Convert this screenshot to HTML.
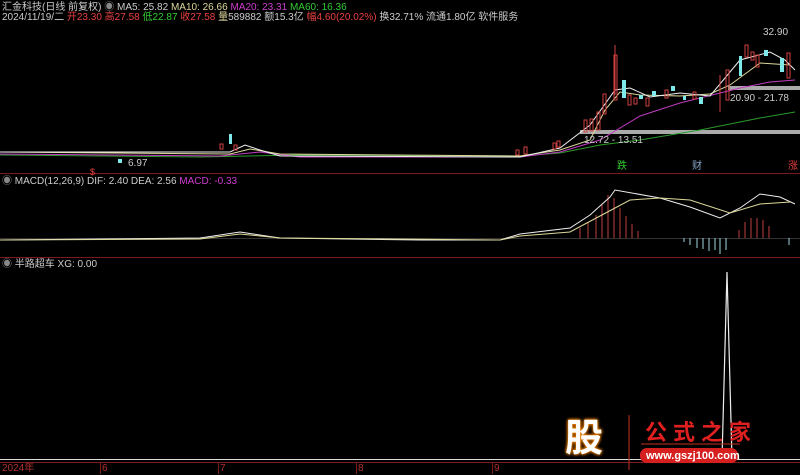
<!DOCTYPE html>
<html><head><meta charset="utf-8"><style>
body{margin:0;background:#000;width:800px;height:474px;overflow:hidden;position:relative;font-family:"Liberation Sans","Noto Sans CJK SC",sans-serif;font-size:10px;color:#ccc}
.t{position:absolute;white-space:nowrap;line-height:12px}
.r{color:#e84040}.g{color:#3c3}.y{color:#dcd89a}.m{color:#d03cd0}.w{color:#ccc}
</style></head><body>
<svg width="800" height="474" style="position:absolute;left:0;top:0">
<g stroke="#7a1a1a" stroke-width="1">
<line x1="0" y1="173.5" x2="800" y2="173.5"/><line x1="0" y1="257.5" x2="800" y2="257.5"/><line x1="0" y1="462.5" x2="800" y2="462.5"/>
<line x1="100.5" y1="462" x2="100.5" y2="474"/><line x1="218.5" y1="462" x2="218.5" y2="474"/><line x1="356.5" y1="462" x2="356.5" y2="474"/><line x1="492.5" y1="462" x2="492.5" y2="474"/>
</g>
<line x1="0" y1="459.5" x2="800" y2="459.5" stroke="#ddd"/>
<polyline points="722,459 727,272 732,459" fill="none" stroke="#eee" stroke-width="1.2"/>
<rect x="580" y="130" width="220" height="4" fill="#aaa"/>
<rect x="728" y="86" width="72" height="4" fill="#aaa"/>
<polyline points="0,155 200,157 300,155 520,156 560,153 600,145 640,140 700,130 760,118 795,112" fill="none" stroke="#2a9a2a"/>
<polyline points="0,154 220,156 260,152 300,157 520,157 560,152 600,140 640,116 680,103 700,98 740,88 770,82 795,80" fill="none" stroke="#c03cc0"/>
<polyline points="0,152 230,154 250,149 280,154 520,156 560,150 590,140 605,110 620,92 640,95 680,96 710,94 730,85 760,63 790,65" fill="none" stroke="#dcd89a"/>
<polyline points="0,152 230,152 245,145 260,150 280,156 520,157 560,148 590,125 615,90 630,88 650,97 680,93 710,96 740,60 770,52 785,60 795,70" fill="none" stroke="#eee"/>
<g fill="none" stroke="#d04040">
<rect x="516" y="150" width="3" height="5"/><rect x="524" y="147" width="3" height="7"/><rect x="553" y="143" width="3" height="6"/><rect x="557" y="141" width="3" height="6"/>
<rect x="584" y="120" width="3" height="12"/><rect x="590" y="119" width="3" height="12"/><rect x="597" y="112" width="3" height="18"/><rect x="603" y="94" width="3" height="20"/>
<rect x="614" y="55" width="3" height="45"/><rect x="628" y="95" width="3" height="10"/><rect x="634" y="98" width="3" height="6"/><rect x="646" y="98" width="3" height="8"/>
<rect x="665" y="90" width="3" height="8"/><rect x="693" y="92" width="3" height="7"/><rect x="726" y="70" width="3" height="30"/><rect x="745" y="45" width="3" height="12"/>
<rect x="751" y="52" width="3" height="8"/><rect x="756" y="55" width="3" height="12"/><rect x="787" y="53" width="3" height="25"/>
<rect x="220" y="144" width="3" height="5"/><rect x="234" y="145" width="3" height="5"/><line x1="615" y1="45" x2="615" y2="95"/>
</g>
<g fill="#7fe8e8">
<rect x="622" y="80" width="4" height="18"/><rect x="639" y="95" width="4" height="4"/><rect x="652" y="91" width="4" height="5"/><rect x="671" y="86" width="4" height="5"/>
<rect x="683" y="96" width="3" height="4"/><rect x="699" y="97" width="4" height="7"/><rect x="739" y="56" width="3" height="20"/><rect x="764" y="50" width="4" height="6"/>
<rect x="780" y="58" width="4" height="14"/><rect x="229" y="134" width="3" height="10"/><rect x="118" y="159" width="4" height="4"/>
</g>
<line x1="720" y1="75" x2="720" y2="112" stroke="#d04040"/>
<line x1="0" y1="238.5" x2="800" y2="238.5" stroke="#333"/>
<g stroke="#c04040"><line x1="596" y1="238" x2="596" y2="215"/><line x1="602" y1="238" x2="602" y2="205"/><line x1="608" y1="238" x2="608" y2="195"/><line x1="614" y1="238" x2="614" y2="198"/><line x1="620" y1="238" x2="620" y2="208"/><line x1="626" y1="238" x2="626" y2="216"/><line x1="632" y1="238" x2="632" y2="224"/><line x1="638" y1="238" x2="638" y2="231"/><line x1="588" y1="238" x2="588" y2="222"/><line x1="580" y1="238" x2="580" y2="228"/><line x1="745" y1="238" x2="745" y2="222"/><line x1="751" y1="238" x2="751" y2="218"/><line x1="757" y1="238" x2="757" y2="218"/><line x1="763" y1="238" x2="763" y2="220"/><line x1="769" y1="238" x2="769" y2="226"/><line x1="739" y1="238" x2="739" y2="230"/></g>
<g stroke="#9fd8e0"><line x1="690" y1="238" x2="690" y2="245"/><line x1="697" y1="238" x2="697" y2="248"/><line x1="703" y1="238" x2="703" y2="249"/><line x1="709" y1="238" x2="709" y2="251"/><line x1="715" y1="238" x2="715" y2="250"/><line x1="720" y1="238" x2="720" y2="254"/><line x1="726" y1="238" x2="726" y2="250"/><line x1="684" y1="238" x2="684" y2="242"/><line x1="789" y1="238" x2="789" y2="245"/></g>
<polyline points="0,240 200,238 240,232 280,238 420,240 500,240 520,234 570,228 590,215 610,197 615,190 660,198 690,207 720,218 740,208 760,194 780,197 795,204" fill="none" stroke="#eee"/>
<polyline points="0,240 200,239 240,234 280,238 500,240 520,236 570,232 600,216 630,200 660,198 690,200 730,213 760,204 790,202" fill="none" stroke="#dcd89a"/>
<line x1="629" y1="415" x2="629" y2="470" stroke="#c03020"/>
<rect x="640" y="448" width="98" height="15" rx="7" fill="#d62020"/>
<line x1="641" y1="444" x2="740" y2="444" stroke="#c03020"/>
</svg>
<div class="t" style="left:2px;top:2px">汇金科技(日线 前复权) <span style="color:#888">◉</span> <span class="w">MA5: 25.82</span> <span class="y">MA10: 26.66</span> <span class="m">MA20: 23.31</span> <span class="g">MA60: 16.36</span></div>
<div class="t" style="left:2px;top:12px">2024/11/19/二 <span class="r">开23.30 高27.58</span> <span class="g">低22.87</span> <span class="r">收27.58</span> <span class="y">量</span>589882 额15.3亿 <span class="r">幅4.60(20.02%)</span> 换32.71% 流通1.80亿 软件服务</div>
<div class="t" style="left:763px;top:27px">32.90</div>
<div class="t" style="left:730px;top:93px">20.90 - 21.78</div>
<div class="t" style="left:584px;top:135px">12.72 - 13.51</div>
<div class="t" style="left:128px;top:158px">6.97</div>
<div class="t" style="left:617px;top:161px;color:#3c3">跌</div>
<div class="t" style="left:692px;top:161px;color:#8ac">财</div>
<div class="t" style="left:788px;top:161px;color:#e84040">涨</div>
<div class="t" style="left:90px;top:166px;color:#e84040;font-size:9px">$</div>
<div class="t" style="left:2px;top:176px"><span style="color:#888">◉</span> MACD(12,26,9) DIF: 2.40 DEA: 2.56 <span class="m">MACD: -0.33</span></div>
<div class="t" style="left:2px;top:259px"><span style="color:#888">◉</span> 半路超车 XG: 0.00</div>
<div class="t" style="left:2px;top:463px;color:#b03030">2024年</div>
<div class="t" style="left:102px;top:463px;color:#b03030">6</div>
<div class="t" style="left:220px;top:463px;color:#b03030">7</div>
<div class="t" style="left:358px;top:463px;color:#b03030">8</div>
<div class="t" style="left:494px;top:463px;color:#b03030">9</div>
<div class="t" style="left:565px;top:417px;font-size:38px;line-height:44px;font-weight:bold;color:#fff;text-shadow:0 0 3px #f80,0 0 3px #f80">股</div>
<div class="t" style="left:645px;top:421px;font-size:22px;line-height:24px;color:#e02020;font-weight:bold;letter-spacing:6px">公式之家</div>
<div class="t" style="left:646px;top:450px;font-size:11px;font-weight:bold;color:#fff">www.gszj100.com</div>
</body></html>
